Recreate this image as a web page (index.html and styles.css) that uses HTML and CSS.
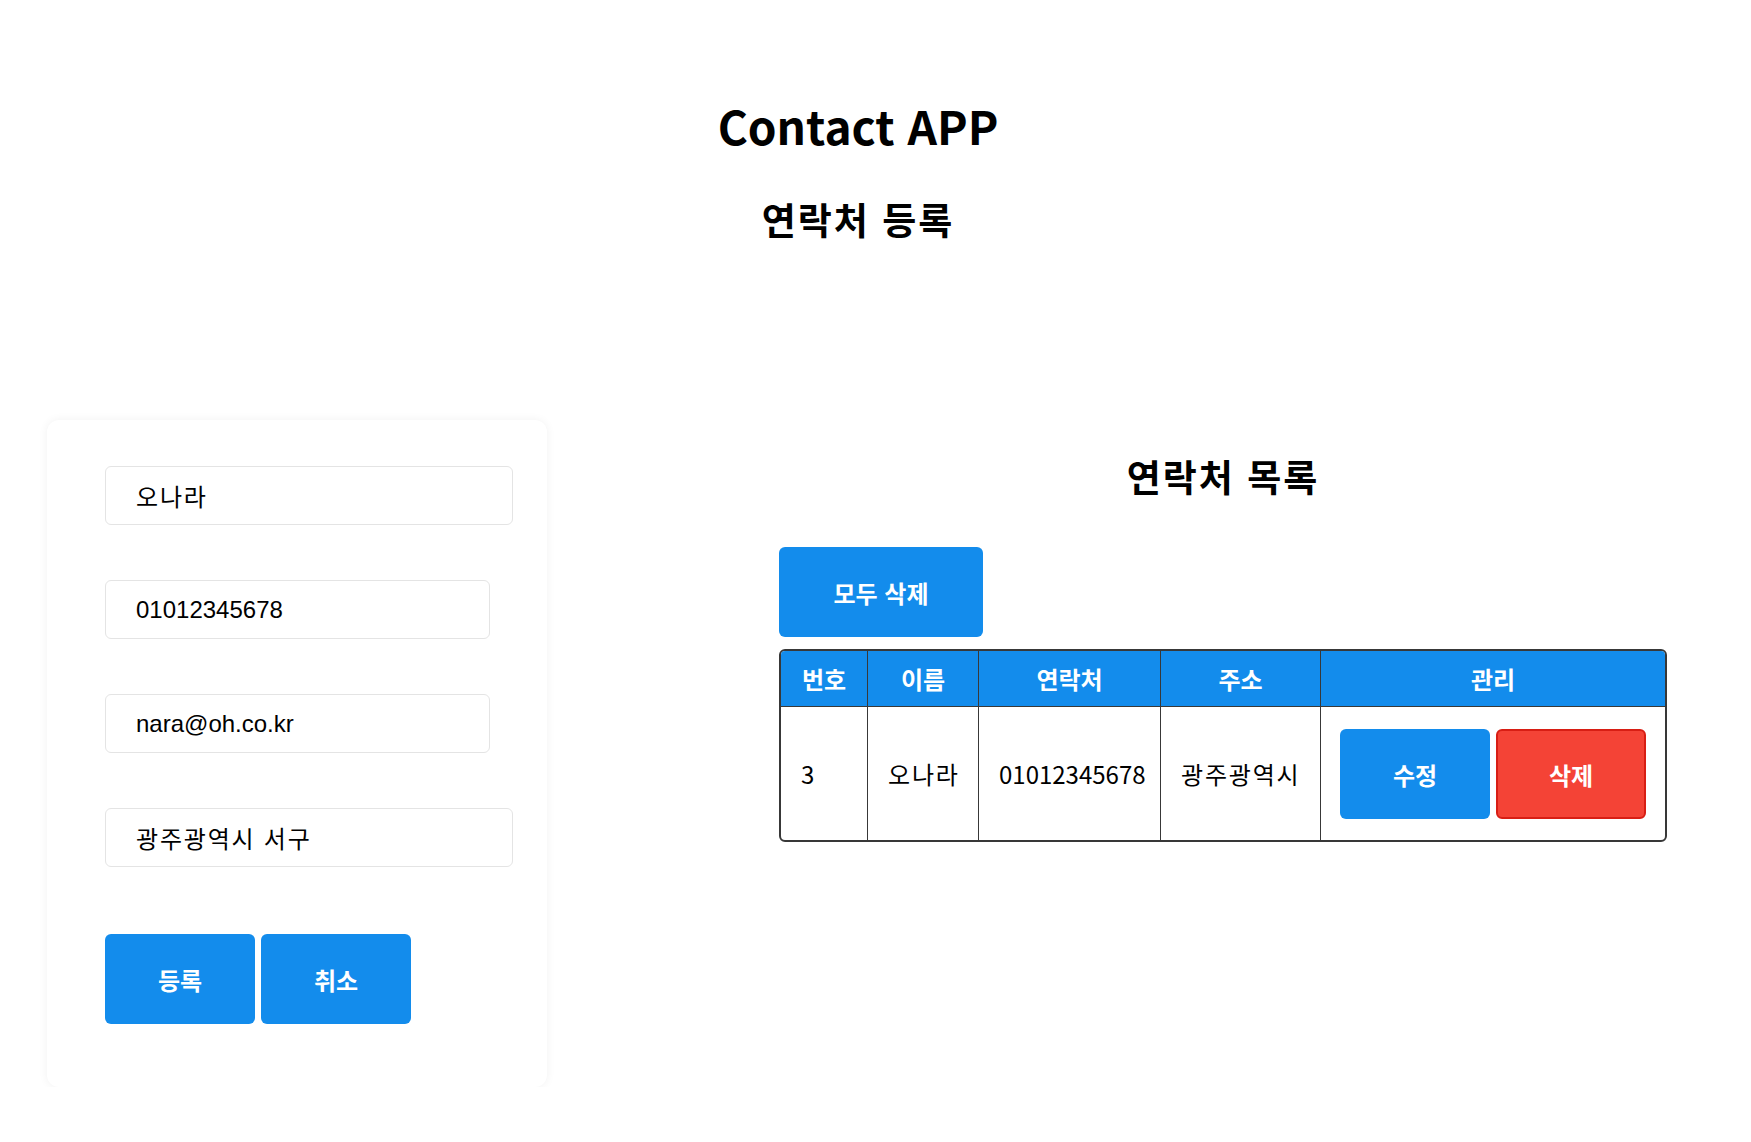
FILE: index.html
```html
<!DOCTYPE html>
<html lang="ko">
<head>
<meta charset="utf-8">
<title>Contact APP</title>
<link rel="stylesheet" href="styles.css">
</head>
<body>
<header class="header">
  <h1 class="title">Contact APP</h1>
  <h2 class="subtitle">연락처 등록</h2>
</header>
<main class="main">
  <section class="card">
    <form class="form">
      <input class="field field-wide field-ko" type="text" value="오나라">
      <input class="field field-narrow" type="tel" value="01012345678">
      <input class="field field-narrow" type="email" value="nara@oh.co.kr">
      <input class="field field-wide field-ko" type="text" value="광주광역시 서구">
      <div class="form-actions">
        <button type="button" class="btn btn-blue">등록</button>
        <button type="button" class="btn btn-blue">취소</button>
      </div>
    </form>
  </section>
  <section class="list">
    <h2 class="list-title">연락처 목록</h2>
    <div class="list-actions">
      <button type="button" class="btn btn-blue btn-wide">모두 삭제</button>
    </div>
    <table class="table">
      <colgroup>
        <col class="c1"><col class="c2"><col class="c3"><col class="c4"><col class="c5">
      </colgroup>
      <thead>
        <tr><th>번호</th><th>이름</th><th>연락처</th><th>주소</th><th>관리</th></tr>
      </thead>
      <tbody>
        <tr>
          <td>3</td>
          <td class="ko">오나라</td>
          <td>01012345678</td>
          <td class="ko">광주광역시</td>
          <td class="manage">
            <div class="manage-actions">
              <button type="button" class="btn btn-blue">수정</button>
              <button type="button" class="btn btn-red">삭제</button>
            </div>
          </td>
        </tr>
      </tbody>
    </table>
  </section>
</main>
</body>
</html>
```
FILE: styles.css
```css
html, body {
  margin: 0;
  padding: 0;
  background: #ffffff;
}
body {
  font-family: "Noto Sans CJK KR", "Noto Sans", sans-serif;
  color: #000;
  font-size: 24px;
}
.header {
  text-align: center;
  padding-right: 35px;
}
.title {
  font-size: 46px;
  line-height: 58px;
  font-weight: 700;
  margin: 96px 0 0;
}
.subtitle {
  font-size: 37px;
  line-height: 44px;
  font-weight: 700;
  letter-spacing: 2px;
  margin: 43px 0 0;
}
.main {
  display: flex;
  align-items: flex-start;
  gap: 232px;
  padding-left: 47px;
  margin-top: 179px;
}
.card {
  width: 500px;
  box-sizing: border-box;
  padding: 46px 0 63px 58px;
  background: #fff;
  border-radius: 12px;
  box-shadow: 0 0 10px rgba(0, 0, 0, 0.06);
}
.form {
  display: flex;
  flex-direction: column;
  align-items: flex-start;
  gap: 55px;
}
.field {
  box-sizing: border-box;
  height: 59px;
  border: 1px solid #e4e4e4;
  border-radius: 6px;
  padding: 0 20px 0 30px;
  font-family: "Liberation Sans", "Noto Sans CJK KR", sans-serif;
  font-size: 24px;
  color: #000;
  background: #fff;
  outline: none;
}
.field-ko { letter-spacing: 1.8px; }
.field-wide { width: 408px; }
.field-narrow { width: 385px; }
.form-actions {
  display: flex;
  gap: 6px;
  margin-top: 12px;
}
.btn {
  box-sizing: border-box;
  width: 150px;
  height: 90px;
  border: none;
  border-radius: 6px;
  font-family: "Noto Sans CJK KR", sans-serif;
  font-size: 24px;
  font-weight: 700;
  color: #fff;
  padding: 0;
  cursor: pointer;
}
.btn-blue { background: #138cec; }
.btn-red {
  background: #f44336;
  border: 2px solid #d81e14;
}
.btn-wide { width: 204px; }
.list {
  width: 888px;
}
.list-title {
  font-size: 37px;
  line-height: 44px;
  font-weight: 700;
  letter-spacing: 2px;
  text-align: center;
  margin: 34px 0 0;
}
.list-actions {
  margin-top: 49px;
}
.table {
  margin-top: 12px;
  width: 888px;
  table-layout: fixed;
  border-collapse: separate;
  border-spacing: 0;
  border: 2px solid #383838;
  border-radius: 6px;
  overflow: hidden;
}
.c1 { width: 87px; }
.c2 { width: 111px; }
.c3 { width: 182px; }
.c4 { width: 160px; }
.table th {
  background: #138cec;
  color: #fff;
  font-weight: 700;
  font-size: 24px;
  height: 55px;
  padding: 0;
  text-align: center;
  border-right: 1px solid #383838;
  border-bottom: 1px solid #383838;
}
.table td {
  font-size: 24px;
  padding: 22px 20px;
  text-align: left;
  border-right: 1px solid #383838;
  white-space: nowrap;
}
.table td.ko { letter-spacing: 1.8px; }
.table th:last-child,
.table td:last-child {
  border-right: none;
}
.table td.manage {
  padding: 22px 19px 21px 19px;
}
.manage-actions {
  display: flex;
  gap: 6px;
}
```
